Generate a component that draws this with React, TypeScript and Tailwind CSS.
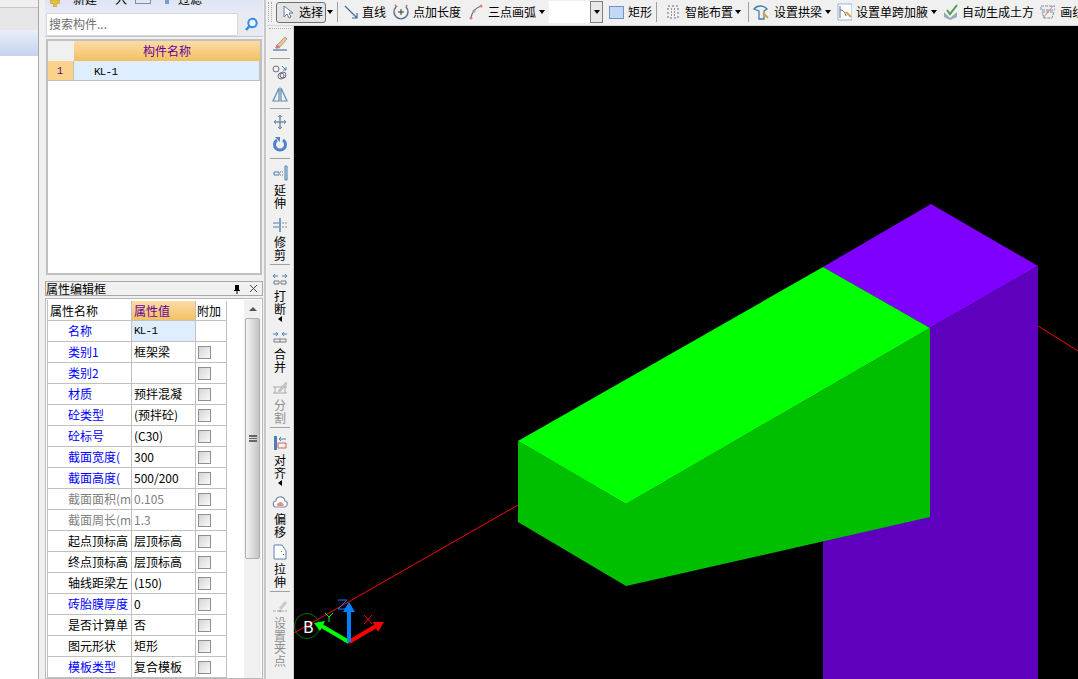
import type { ReactNode } from "react";

const FONT = "[font-family:'Noto_Sans_CJK_SC','Liberation_Sans',sans-serif]";

const Caret = ({ className = "" }: { className?: string }) => (
  <span className={`inline-block h-0 w-0 border-x-[3.5px] border-t-4 border-x-transparent border-t-black ${className}`} />
);

const Sep = () => <span className="mx-1 h-5 w-px shrink-0 bg-[#a0a0a0]" />;

const Ico = ({ children, w = 16 }: { children: ReactNode; w?: number }) => (
  <svg width={w} height="18" viewBox={`0 0 ${w} 18`} fill="none" className="shrink-0">
    {children}
  </svg>
);

const TopToolbar = () => (
  <div className="flex h-[26px] items-center overflow-hidden whitespace-nowrap border-b border-[#d8d8d8] bg-[#f0f0f0] pb-[1px] text-[12px] text-black">
    <span className="ml-[1px] h-[20px] w-[4px] shrink-0 border-x border-dotted border-[#aaa]" />
    <div className="ml-[4px] flex h-[21px] w-[50px] shrink-0 items-center rounded-[3px] border border-[#707070] bg-[#e4e4e4] pl-[3px]">
      <Ico w={14}>
        <path d="M4 3v11l3-3 2 4 2-1-2-4h4z" fill="#fff" stroke="#6a7a9a" />
      </Ico>
      <span className="ml-[5px]">选择</span>
    </div>
    <Caret className="ml-[1px]" />
    <Sep />
    <span className="ml-[2px]" />
    <Ico w={15}>
      <path d="M1 3l12 12M13 10v5H8" stroke="#3e6a9a" strokeWidth="1.2" />
    </Ico>
    <span className="ml-[3px]">直线</span>
    <span className="ml-[7px]" />
    <Ico w={17}>
      <path d="M3 4a7 7 0 1 0 10 0" stroke="#55708e" strokeWidth="1.4" />
      <path d="M5 9h6M8 6v6" stroke="#333" />
      <path d="M2 2l2 2M14 2l-1 2" stroke="#d06050" strokeWidth="1.5" />
    </Ico>
    <span className="ml-[3px]">点加长度</span>
    <span className="ml-[8px]" />
    <Ico w={14}>
      <path d="M2 15C3 9 6 5 12 3" stroke="#55708e" strokeWidth="1.2" />
      <circle cx="2" cy="15" r="1.5" fill="#e08070" />
      <circle cx="5" cy="8" r="1.5" fill="#e08070" />
      <circle cx="12" cy="3" r="1.5" fill="#e08070" />
    </Ico>
    <span className="ml-[5px]">三点画弧</span>
    <Caret className="ml-[3px]" />
    <div className="ml-[4px] flex h-[22px] w-[54px] shrink-0 items-center justify-end bg-white">
      <span className="flex h-[22px] w-[13px] items-center justify-center border border-[#808080] bg-[#e8e8e8]">
        <Caret />
      </span>
    </div>
    <span className="ml-[6px] h-[13px] w-[15px] shrink-0 border border-[#6f93c8] bg-[#c4d8f4]" />
    <span className="ml-[4px]">矩形</span>
    <Sep />
    <span className="ml-[5px]" />
    <Ico w={14}>
      <path d="M2 3h10v12H2z" stroke="#667" strokeDasharray="2 2" />
      <path d="M5 6h1M8 6h1M5 9h1M8 9h1M5 12h1M8 12h1" stroke="#445" />
    </Ico>
    <span className="ml-[5px]">智能布置</span>
    <Caret className="ml-[2px]" />
    <span className="ml-[3px]" />
    <Sep />
    <Ico w={17}>
      <path d="M1 6c3-4 10-4 13 0l-3 2v8H6V8z" stroke="#4a7fb0" strokeWidth="1.3" />
      <path d="M10 10l5 5" stroke="#e0a040" strokeWidth="2" />
    </Ico>
    <span className="ml-[4px]">设置拱梁</span>
    <Caret className="ml-[3px]" />
    <span className="ml-[6px]" />
    <Ico w={15}>
      <path d="M1 1h14v16H1z" fill="#fff" stroke="#8db4dc" />
      <path d="M3 3v12M3 7c4 0 5 3 6 6" stroke="#667" />
      <path d="M9 9l5 5" stroke="#e0a040" strokeWidth="2" />
    </Ico>
    <span className="ml-[4px]">设置单跨加腋</span>
    <Caret className="ml-[3px]" />
    <span className="ml-[6px]" />
    <Ico w={15}>
      <path d="M1 9l6 6 7-6v5l-7 3-6-3z" fill="#9aa8b4" />
      <path d="M4 7l3 4 7-9" stroke="#4aa04a" strokeWidth="2" />
    </Ico>
    <span className="ml-[4px]">自动生成土方</span>
    <span className="ml-[6px]" />
    <Ico w={15}>
      <path d="M1 3h14v4H1zM2 9h12l-2 6H4z" stroke="#7a8ea8" strokeDasharray="3 1" />
      <path d="M3 15L13 3" stroke="#d08070" />
    </Ico>
    <span className="ml-[5px]">画线</span>
  </div>
);

const VSep = ({ className }: { className: string }) => (
  <div className={`mx-[3px] h-px shrink-0 bg-[#a0a0a0] ${className}`} />
);

const VBtn = ({
  className = "",
  text = "",
  icon,
  muted = false,
  caret = false,
}: {
  className?: string;
  text?: string;
  icon: ReactNode;
  muted?: boolean;
  caret?: boolean;
}) => (
  <div className={`flex shrink-0 flex-col items-center ${className}`}>
    <div className="flex h-[22px] items-center justify-center">{icon}</div>
    {text && (
      <span className={`w-[12px] break-all text-[12px] leading-[12.5px] ${muted ? "text-[#8f8f8f]" : "text-black"}`}>
        {text}
      </span>
    )}
    {caret && (
      <span className="mt-[1px] h-0 w-0 border-y-[3px] border-r-4 border-y-transparent border-r-black" />
    )}
  </div>
);

const SideToolbar = () => (
  <div className="flex w-[27px] shrink-0 flex-col overflow-hidden border-r border-[#d0d0d0] bg-[#f0f0f0]">
    <div className="mx-[2px] mt-[2px] h-[3px] shrink-0 border-t border-dotted border-[#aaa]" />
    <VBtn
      className="mt-[2px]"
      icon={
        <Ico>
          <path d="M4 11L13 2l2 2-8 9z" fill="#e9c98a" stroke="#777" strokeWidth=".6" />
          <path d="M1 15h14" stroke="#6c8ab0" strokeWidth="1.5" />
          <path d="M3 13c1-2 2-3 3-3l2 2c-1 2-3 2-5 1z" fill="#e07090" />
        </Ico>
      }
    />
    <VSep className="mt-[3px]" />
    <VBtn
      className="mt-[2px]"
      icon={
        <Ico>
          <circle cx="4" cy="6" r="3" stroke="#667" />
          <circle cx="11" cy="12" r="3" stroke="#667" />
          <circle cx="9" cy="13" r="3" stroke="#667" />
          <path d="M10 3l4 4M14 4v3h-3" stroke="#4a7fb0" />
        </Ico>
      }
    />
    <VBtn
      icon={
        <Ico>
          <path d="M7 3v13H1zM9 3v13h6z" stroke="#5d8bbb" strokeWidth="1.2" />
          <path d="M8 1v16" stroke="#8aa" strokeWidth=".6" />
        </Ico>
      }
    />
    <VSep className="mt-[3px]" />
    <VBtn
      className="mt-[2px]"
      icon={
        <Ico>
          <path d="M8 2v14M2 9h12" stroke="#6d8ca8" strokeWidth="1.5" />
          <path d="M6 4l2-2 2 2M6 14l2 2 2-2M4 7L2 9l2 2M12 7l2 2-2 2" stroke="#6d8ca8" />
        </Ico>
      }
    />
    <VBtn
      icon={
        <Ico>
          <path d="M11 5a5.5 5.5 0 1 1-6 0" stroke="#4f80d0" strokeWidth="3" />
          <path d="M3 2h5v5z" fill="#4f80d0" />
        </Ico>
      }
    />
    <VSep className="mt-[3px]" />
    <VBtn
      className="mt-[3px]"
      text="延伸"
      icon={
        <Ico>
          <path d="M13 2h2v14h-2z" stroke="#4a7fb0" fill="#cfe0f0" />
          <path d="M2 8h5v3H2z" stroke="#4a7fb0" />
          <path d="M8 8h4M8 11h4" stroke="#667" strokeDasharray="1 1" />
        </Ico>
      }
    />
    <VBtn
      className="mt-[5px]"
      text="修剪"
      icon={
        <Ico>
          <path d="M8 2v14" stroke="#4a7fb0" strokeWidth="1.4" />
          <path d="M1 7h6M1 11h6" stroke="#4a7fb0" />
          <path d="M10 7h5M10 11h5" stroke="#889" strokeDasharray="2 1" />
        </Ico>
      }
    />
    <VSep className="mt-[3px]" />
    <VBtn
      className="mt-[3px]"
      text="打断"
      caret
      icon={
        <Ico>
          <path d="M1 6h5M10 6h5" stroke="#4a7fb0" />
          <path d="M3 4L1 6l2 2M13 4l2 2-2 2" stroke="#4a7fb0" />
          <path d="M2 11h5v3H2zM9 11h5v3H9z" stroke="#778" />
        </Ico>
      }
    />
    <VBtn
      className="mt-[4px]"
      text="合并"
      icon={
        <Ico>
          <path d="M1 6h5M10 6h5" stroke="#4a7fb0" />
          <path d="M4 4l2 2-2 2M12 4l-2 2 2 2" stroke="#4a7fb0" />
          <path d="M2 11h12v3H2zM8 11v3" stroke="#778" />
        </Ico>
      }
    />
    <VBtn
      className="mt-[4px]"
      text="分割"
      muted
      icon={
        <Ico>
          <path d="M1 8h14M1 14h14M3 8v6M13 8v6" stroke="#aaa" />
          <path d="M6 12l8-9 1 2-7 8z" fill="#c8c8c8" stroke="#aaa" strokeWidth=".5" />
        </Ico>
      }
    />
    <VSep className="mt-[3px]" />
    <VBtn
      className="mt-[4px]"
      text="对齐"
      caret
      icon={
        <Ico>
          <path d="M2 2h3v14H2z" fill="#4a7fb0" />
          <path d="M6 9h8v5H6z" stroke="#d06060" />
          <path d="M7 5h7M7 5l2-2M7 5l2 2" stroke="#4a7fb0" />
        </Ico>
      }
    />
    <VBtn
      className="mt-[5px]"
      text="偏移"
      icon={
        <Ico>
          <path d="M3 14c-3-2-2-6 1-6 0-5 8-6 9 0 3 0 3 5 0 6z" stroke="#7a90a8" fill="#fff" strokeWidth="1.2" />
          <path d="M6 13c-2-1-1-3 1-3 1-2 4-1 4 1 1 0 1 2 0 2z" fill="#eb8d80" />
        </Ico>
      }
    />
    <VBtn
      className="mt-[3px]"
      text="拉伸"
      icon={
        <Ico>
          <path d="M2 2h8l4 6v8H2z" stroke="#5f7fa8" fill="#fff" />
          <path d="M9 8l1 1M11 11l1 1" stroke="#667" />
        </Ico>
      }
    />
    <VSep className="mt-[3px]" />
    <VBtn
      className="mt-[3px]"
      text="设置夹点"
      muted
      icon={
        <Ico>
          <path d="M7 11l6-7 2 2-6 7z" fill="#c8c8c8" />
          <path d="M1 14h14" stroke="#aaa" strokeDasharray="3 1" />
          <path d="M7 13h2v2H7z" fill="#aaa" />
        </Ico>
      }
    />
  </div>
);

type Row = { name: string; value: string; color: "blue" | "black" | "gray"; noCheck?: boolean; mono?: boolean };

const ROWS: Row[] = [
  { name: "名称", value: "KL-1", color: "blue", noCheck: true, mono: true },
  { name: "类别1", value: "框架梁", color: "blue" },
  { name: "类别2", value: "", color: "blue" },
  { name: "材质", value: "预拌混凝", color: "blue" },
  { name: "砼类型", value: "(预拌砼)", color: "blue" },
  { name: "砼标号", value: "(C30)", color: "blue" },
  { name: "截面宽度(", value: "300", color: "blue" },
  { name: "截面高度(", value: "500/200", color: "blue" },
  { name: "截面面积(m", value: "0.105", color: "gray" },
  { name: "截面周长(m", value: "1.3", color: "gray" },
  { name: "起点顶标高", value: "层顶标高", color: "black" },
  { name: "终点顶标高", value: "层顶标高", color: "black" },
  { name: "轴线距梁左", value: "(150)", color: "black" },
  { name: "砖胎膜厚度", value: "0", color: "blue" },
  { name: "是否计算单", value: "否", color: "black" },
  { name: "图元形状", value: "矩形", color: "black" },
  { name: "模板类型", value: "复合模板", color: "blue" },
];

const nameColor = { blue: "text-[#0000ff]", black: "text-black", gray: "text-[#808080]" };

const PropRow = ({ row, index }: { row: Row; index: number }) => (
  <div className="flex h-[21px] shrink-0 border-b border-[#c0c0c0] text-[12px] leading-[20px]">
    <div className={`w-[84px] shrink-0 overflow-hidden whitespace-nowrap border-r border-[#c0c0c0] pl-[20px] ${nameColor[row.color]}`}>
      {row.name}
    </div>
    <div
      className={`w-[64px] shrink-0 overflow-hidden whitespace-nowrap border-r border-[#c0c0c0] pl-[2px] ${
        row.color === "gray" ? "text-[#808080]" : "text-black"
      } ${index === 0 ? "bg-[#deeeff]" : ""} ${row.mono ? "font-['Liberation_Mono'] text-[11px] tracking-[-0.8px]" : ""}`}
    >
      {row.value}
    </div>
    <div className="flex w-[31px] shrink-0 items-center border-r border-[#c0c0c0] pl-[2px]">
      {!row.noCheck && (
        <span className="h-[13px] w-[13px] border border-[#8e8f8f] bg-gradient-to-br from-[#d4d4d4] to-[#fafafa]" />
      )}
    </div>
  </div>
);

const PropertyPanel = () => (
  <div className="flex min-h-0 flex-1 flex-col">
    <div className="flex h-[15px] items-center justify-between border border-[#a8a8a8] bg-[#f0f0f0] pr-[4px] text-[12px] leading-[14px]">
      <span>属性编辑框</span>
      <span className="flex items-center gap-[8px] text-black">
        <svg width="8" height="10" viewBox="0 0 8 10">
          <path d="M2 1h4v5h1v1H1V6h1zM3.5 7h1v3h-1z" fill="#000" />
        </svg>
        <svg width="9" height="9" viewBox="0 0 9 9">
          <path d="M1 1l7 7M8 1L1 8" stroke="#444" />
        </svg>
      </span>
    </div>
    <div className="mt-[2px] flex min-h-0 flex-1 border border-[#b8b8b8] bg-white pl-[1px] pt-[1px]">
      <div className="flex w-[180px] shrink-0 flex-col overflow-hidden border-l border-[#c0c0c0] pt-[1px]">
        <div className="flex h-[20px] shrink-0 border-b border-[#c0c0c0] text-[12px] leading-[20px]">
          <div className="w-[84px] shrink-0 border-r border-[#c0c0c0] pl-[2px]">属性名称</div>
          <div className="w-[64px] shrink-0 border-r border-[#c0c0c0] bg-gradient-to-b from-[#fbdca6] to-[#f2c060] pl-[2px] text-[#660099]">
            属性值
          </div>
          <div className="w-[31px] shrink-0 border-r border-[#c0c0c0] pl-[1px]">附加</div>
        </div>
        {ROWS.map((row, i) => (
          <PropRow key={row.name} row={row} index={i} />
        ))}
      </div>
      <div className="ml-auto mr-[1px] flex w-[17px] shrink-0 flex-col items-center bg-[#f0f0f0]">
        <div className="flex h-[18px] items-center justify-center">
          <span className="h-0 w-0 border-x-4 border-b-4 border-x-transparent border-b-[#555]" />
        </div>
        <div className="flex h-[241px] w-[15px] items-center justify-center rounded-[2px] border border-[#b0b0b0] bg-gradient-to-r from-[#f4f4f4] to-[#c4c4c4]">
          <span className="h-[7px] w-[8px] border-y border-[#666] bg-[linear-gradient(#666_1px,transparent_1px)] bg-[length:100%_2px]" />
        </div>
      </div>
    </div>
  </div>
);

const ListPanel = () => (
  <div className="flex h-[281px] shrink-0 flex-col">
    <div className="-mt-[1px] flex h-[13px] shrink-0 items-center gap-[6px] overflow-hidden bg-gradient-to-b from-[#dfe4f4] to-[#e6eaf6] text-[12px] leading-[12px]">
      <div className="-mt-[13px] flex items-center whitespace-nowrap pl-[5px]">
        <svg width="10" height="10" viewBox="0 0 10 10" className="mt-[5px] shrink-0">
          <path d="M3.5 0h3v3.5H10v3H6.500V10h-3V6.500H0v-3h3.500z" fill="#e8c040" stroke="#b89020" strokeWidth=".5" />
        </svg>
        <span className="ml-[13px] w-[38px]">新建</span>
        <span className="ml-[4px] w-[10px]">入</span>
        <span className="ml-[10px] h-[10px] w-[16px] border border-[#7a8ea8]" />
        <span className="ml-[14px] h-[10px] w-[4px] bg-[#7a9ad0]" />
        <span className="ml-[9px]">过滤</span>
      </div>
    </div>
    <div className="flex h-[25px] shrink-0 items-center border-b border-[#c8c8d0] bg-[#e9e9f2] pl-[1px]">
      <div className="flex h-[23px] w-[192px] items-center rounded-[2px] border border-[#d8d8d8] bg-white pl-[2px] text-[12px] text-[#6e6e6e]">
        搜索构件...
      </div>
      <svg width="15" height="15" viewBox="0 0 15 15" className="ml-[6px]">
        <circle cx="8.5" cy="6" r="4.2" fill="#e8f4ff" stroke="#2f8fe0" strokeWidth="2" />
        <path d="M5.5 9L2 13" stroke="#2f8fe0" strokeWidth="2.5" />
      </svg>
    </div>
    <div className="mx-[1px] mt-[2px] mb-[6px] flex min-h-0 flex-1 flex-col border-2 border-[#c0c0c0] bg-white">
      <div className="flex h-[20px] shrink-0">
        <div className="w-[26px] shrink-0 bg-[#f0f0f0]" />
        <div className="w-[186px] bg-gradient-to-b from-[#fbdca6] to-[#f2c060] text-center text-[12px] leading-[20px] text-[#660099]">
          构件名称
        </div>
      </div>
      <div className="flex h-[20px] shrink-0 border-b border-[#c0c0c0] text-[12px] leading-[22px]">
        <div className="w-[26px] shrink-0 border-r border-[#c0c0c0] bg-[#fbd28c] pl-[9px] font-['Liberation_Mono'] text-[10px] text-[#660066]">
          1
        </div>
        <div className="w-[186px] border-r border-[#c0c0c0] bg-[#deeeff] pl-[20px] font-['Liberation_Mono'] text-[11px] tracking-[-0.8px]">
          KL-1
        </div>
      </div>
    </div>
  </div>
);

const Viewport = () => (
  <div className="relative min-w-0 flex-1 bg-black">
    <svg width="784" height="653" viewBox="294 26 784 653" className="absolute inset-0">
      <path d="M294 633L518 505M1038 326L1078 351" stroke="#ff0000" strokeWidth="1" fill="none" />
      <polygon points="823,267 931,204 1038,266 930,328" fill="#7f00ff" />
      <polygon points="930,328 1038,266 1038,679 930,679" fill="#5f00bf" />
      <polygon points="823,500 930,400 930,679 823,679" fill="#5f00bf" />
      <polygon points="518,441 626,504 626,586 518,522" fill="#00bf00" />
      <polygon points="626,504 930,328 930,517 626,586" fill="#00bf00" />
      <polygon points="518,441 823,267 930,328 626,504" fill="#00ff00" />
      <circle cx="307" cy="626" r="12.5" fill="none" stroke="#0b6b0b" />
      <path d="M349 642L320 625" stroke="#00ff00" strokeWidth="4" />
      <polygon points="314,623 325,621 320,631" fill="#00ff00" />
      <path d="M349 642L376 626" stroke="#ff0000" strokeWidth="4" />
      <polygon points="384,622 373,622 378,632" fill="#ff0000" />
      <path d="M349 642V610" stroke="#0080ff" strokeWidth="4" />
      <polygon points="349,602 343,612 355,612" fill="#0080ff" />
      <path d="M338 600h9l-9 9h9" stroke="#0080ff" fill="none" />
      <path d="M325 613l4 4 4-4M329 617v5" stroke="#00ff00" fill="none" />
      <path d="M364 615l8 9M372 615l-8 9" stroke="#ff0000" fill="none" />
    </svg>
    <span className="absolute left-[9px] top-[591px] text-[16px] leading-[18px] text-white">B</span>
  </div>
);

export default function App() {
  return (
    <div className={`flex h-[679px] w-[1078px] overflow-hidden bg-[#f0f0f0] text-black ${FONT}`}>
      <div className="flex w-[39px] shrink-0 flex-col border-r border-[#a8a8a8] bg-white">
        <div className="h-[8px] border-b border-[#c8c8c8] bg-[#f0f0f0]" />
        <div className="h-[22px] bg-[#e6e6e6]" />
        <div className="h-[26px] bg-gradient-to-b from-[#e8eefa] to-[#c6d4ee]" />
      </div>
      <div className="ml-[6px] flex w-[218px] shrink-0 flex-col">
        <ListPanel />
        <PropertyPanel />
      </div>
      <div className="ml-[1px] w-[3px] shrink-0 border-l-2 border-[#c8c8c8] bg-[#f4f4f4]" />
      <div className="flex min-w-0 flex-1 flex-col">
        <TopToolbar />
        <div className="flex min-h-0 flex-1">
          <SideToolbar />
          <Viewport />
        </div>
      </div>
    </div>
  );
}
